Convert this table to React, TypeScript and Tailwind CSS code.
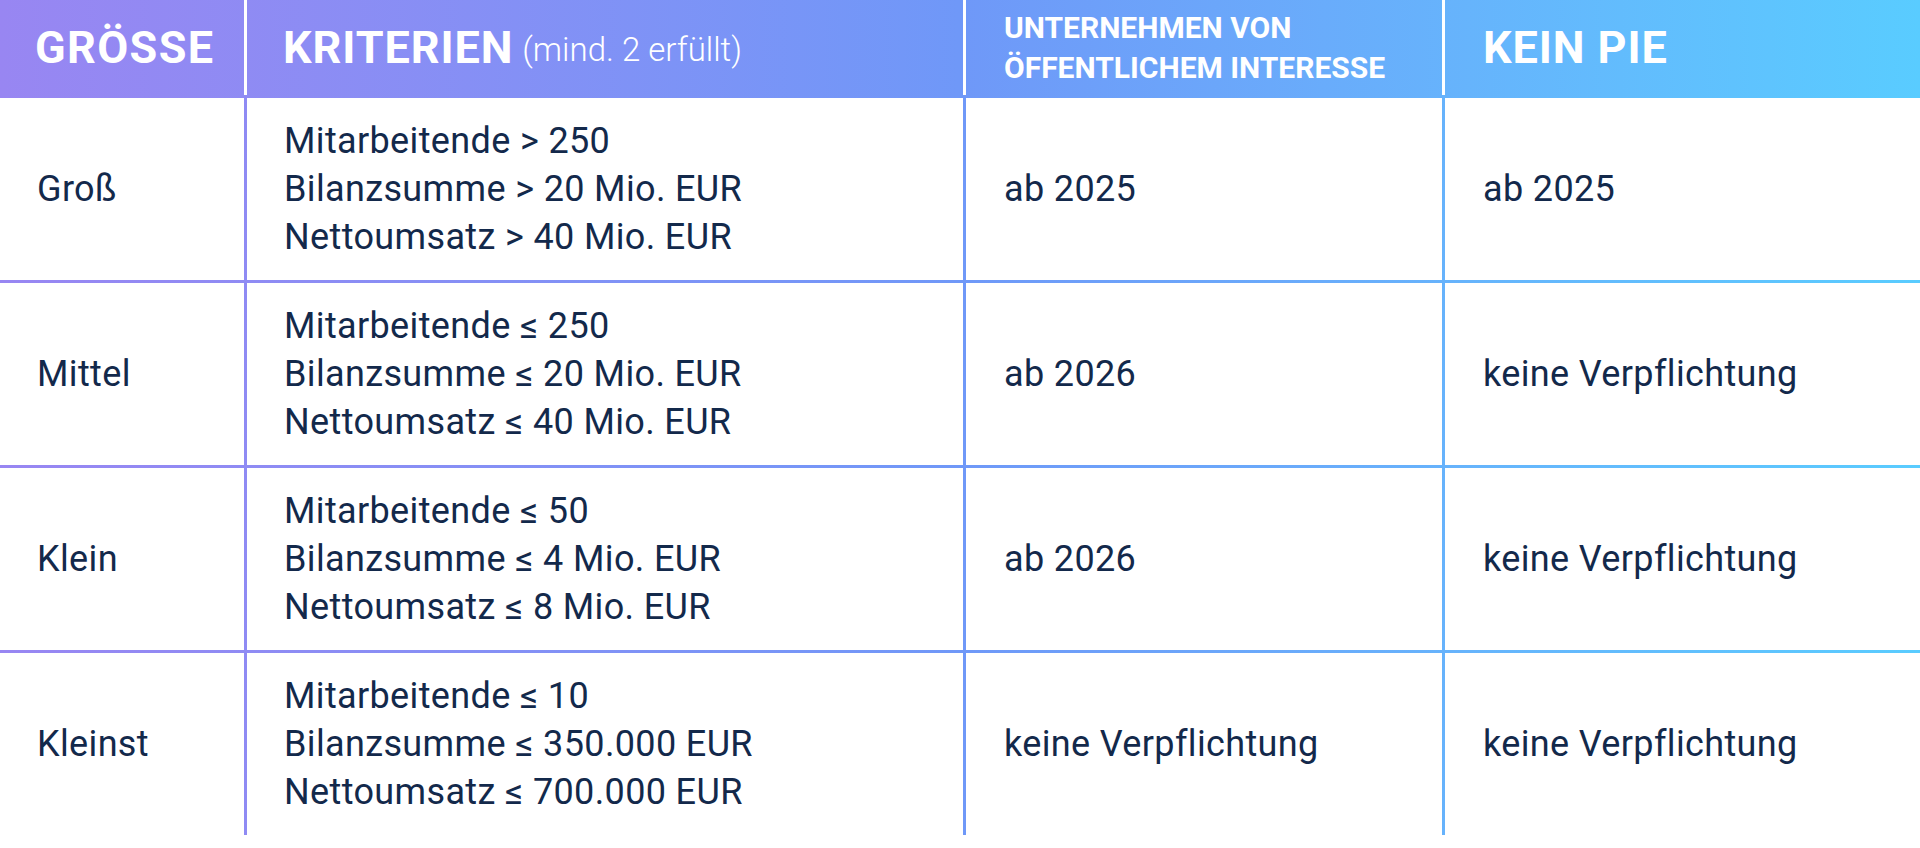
const rows = [
  {
    size: "Groß",
    criteria: ["Mitarbeitende > 250", "Bilanzsumme > 20 Mio. EUR", "Nettoumsatz > 40 Mio. EUR"],
    pie: "ab 2025",
    noPie: "ab 2025",
  },
  {
    size: "Mittel",
    criteria: ["Mitarbeitende ≤ 250", "Bilanzsumme ≤ 20 Mio. EUR", "Nettoumsatz ≤ 40 Mio. EUR"],
    pie: "ab 2026",
    noPie: "keine Verpflichtung",
  },
  {
    size: "Klein",
    criteria: ["Mitarbeitende ≤ 50", "Bilanzsumme ≤ 4 Mio. EUR", "Nettoumsatz ≤ 8 Mio. EUR"],
    pie: "ab 2026",
    noPie: "keine Verpflichtung",
  },
  {
    size: "Kleinst",
    criteria: ["Mitarbeitende ≤ 10", "Bilanzsumme ≤ 350.000 EUR", "Nettoumsatz ≤ 700.000 EUR"],
    pie: "keine Verpflichtung",
    noPie: "keine Verpflichtung",
  },
];

const cell =
  "flex h-[182px] items-center bg-white pl-[37px] text-[36px] leading-[48px] tracking-[0.01em] text-[#13294b]";

// white line between header cells, drawn into the grid gap
const headSep = "shadow-[3px_0_0_0_#ffffff]";

const App = () => {
  return (
    <div className="h-[848px] w-[1920px] overflow-hidden bg-white font-['Roboto',sans-serif]">
      <div className="grid grid-cols-[244px_716px_476px_1fr] gap-[3px] bg-gradient-to-r from-[#9886f2] via-[#6f98f8] to-[#59ccff]">
        {/* header */}
        <div
          className={cn(
            "flex h-[95px] items-center pl-[35px] text-[45px] font-bold tracking-[0.03em] text-white",
            headSep,
          )}
        >
          GRÖSSE
        </div>
        <div className={cn("flex h-[95px] items-center pl-[36px] text-white", headSep)}>
          <span className="text-[45px] font-bold tracking-[0.02em]">KRITERIEN</span>
          <span className="ml-[9px] mt-[4px] text-[33px] font-light">(mind. 2 erfüllt)</span>
        </div>
        <div
          className={cn(
            "flex h-[95px] items-center pl-[38px] text-[30px] font-bold leading-[40px] text-white",
            headSep,
          )}
        >
          UNTERNEHMEN VON
          <br />
          ÖFFENTLICHEM INTERESSE
        </div>
        <div className="flex h-[95px] items-center pl-[38px] text-[45px] font-bold tracking-[0.02em] text-white">
          KEIN PIE
        </div>

        {/* body */}
        {rows.map((row, i) => (
          <div key={i} className="contents">
            <div className={cell}>{row.size}</div>
            <div className={cn(cell, "flex-col items-start justify-center pl-[36px]")}>
              {row.criteria.map((c) => (
                <div key={c}>{c}</div>
              ))}
            </div>
            <div className={cn(cell, "pl-[38px]")}>{row.pie}</div>
            <div className={cn(cell, "pl-[38px]")}>{row.noPie}</div>
          </div>
        ))}
      </div>
    </div>
  );
};

function cn(...classes: string[]) {
  return classes.join(" ");
}

export default App;
